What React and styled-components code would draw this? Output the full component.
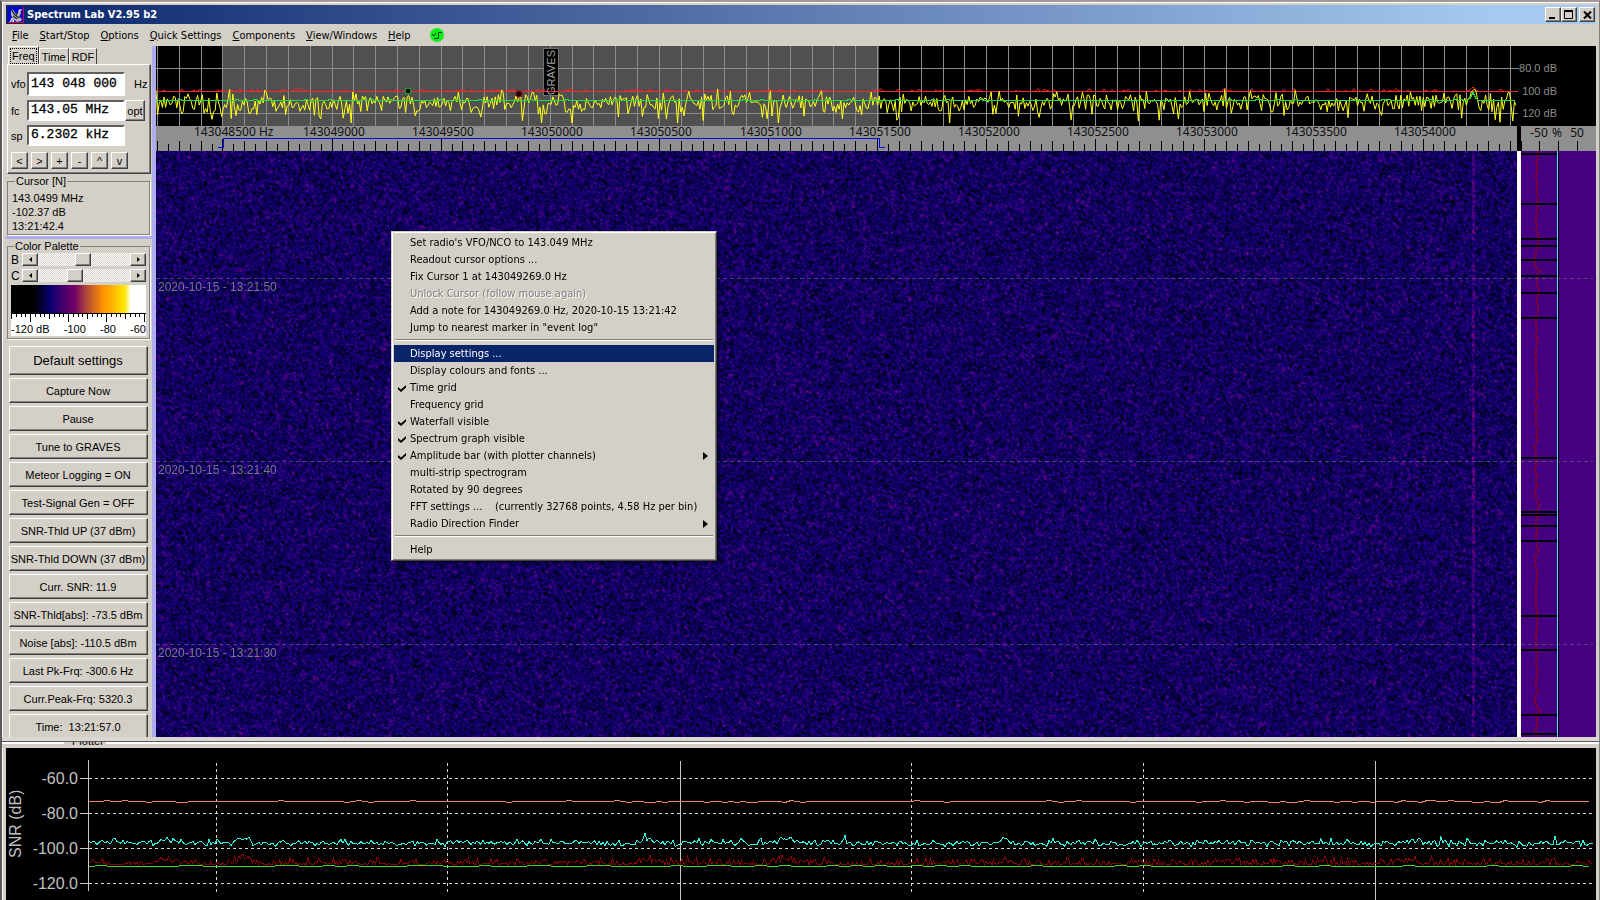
import React, { useEffect, useRef } from "react";
import styled, { createGlobalStyle, css } from "styled-components";

const face = "#d4d0c8";
const navy = "#0a246a";
const lavender = "#b0acf0";
const tahoma = '"DejaVu Sans Condensed", "Noto Sans", sans-serif';
const arial = '"Liberation Sans", Arial, sans-serif';

const GlobalStyle = createGlobalStyle`
  * { box-sizing: border-box; }
  body { margin: 0; background: ${face}; font: 11px ${arial}; color: #000; overflow: hidden; }
  button, input { font: inherit; color: inherit; margin: 0; }
`;

const raised = css`
  border: 1px solid;
  border-color: #fff #404040 #404040 #fff;
  box-shadow: inset -1px -1px 0 #808080;
  background: ${face};
`;

/* ---------- window frame ---------- */

const Window = styled.div`
  height: 100vh;
  display: flex;
  flex-direction: column;
  border-top: 2px solid #a29a98;
  border-left: 2px solid #5c5a58;
  border-right: 1px solid #808080;
  padding: 0 3px 0 4px;
  background: ${face};
  box-shadow: inset 1px 1px 0 #fff;
`;

const TitleBar = styled.header`
  margin-top: 3px;
  height: 19px;
  flex: none;
  display: flex;
  align-items: center;
  padding: 0 1px 0 2px;
  background: linear-gradient(90deg, ${navy}, #a6caf0 94%);
`;

const Title = styled.h1`
  margin: 0 auto 0 3px;
  font: bold 11px ${tahoma};
  color: #fff;
`;

const CaptionButton = styled.button`
  ${raised}
  width: 16px;
  height: 15px;
  padding: 0;
  margin-left: ${(p) => (p.$apart ? "2px" : 0)};
  display: flex;
  align-items: center;
  justify-content: center;
`;

const MenuBar = styled.nav`
  height: 22px;
  flex: none;
  display: flex;
  align-items: center;
  gap: 11px;
  padding-left: 6px;
`;

const MenuBarItem = styled.button`
  border: 0;
  padding: 0;
  background: none;
  font: 11px ${tahoma};
`;

const Status = styled.svg`
  margin-left: 8px;
`;

const Main = styled.main`
  flex: 1;
  min-height: 0;
  display: flex;
`;

/* ---------- side panel ---------- */

const Sidebar = styled.aside`
  width: 150px;
  flex: none;
  overflow: hidden;
  padding: 0 1px 0 1px;
  border-right: 4px solid ${lavender};
`;

const TabStrip = styled.div`
  display: flex;
  align-items: flex-end;
  height: 18px;
  padding-left: 1px;
`;

const Tab = styled.button`
  height: ${(p) => (p.$active ? "18px" : "16px")};
  padding: 0 2px;
  border: 1px solid;
  border-color: #fff #404040 transparent #fff;
  border-bottom: 0;
  background: ${face};
  line-height: 14px;
  & > span {
    display: block;
    padding: ${(p) => (p.$active ? "0 1px" : 0)};
    outline: ${(p) => (p.$active ? "1px dotted #000" : "none")};
  }
`;

const TabPanel = styled.section`
  display: flex;
  flex-direction: column;
  gap: 4px;
  padding: 7px 2px 4px 3px;
  border: 1px solid;
  border-color: #fff #404040 #404040 #fff;
  box-shadow: inset -1px -1px 0 #808080;
`;

const FieldRow = styled.div`
  display: flex;
  align-items: center;
  height: ${(p) => (p.$tall ? "24px" : "21px")};
`;

const FieldLabel = styled.label`
  width: 16px;
  flex: none;
  white-space: nowrap;
`;

const Field = styled.input`
  width: 98px;
  height: 100%;
  padding: 0 2px 2px;
  border: 2px solid;
  border-color: #606060 #fff #fff #606060;
  background: #fff;
  font: 13px "Liberation Mono", monospace;
  -webkit-text-stroke: 0.3px #000;
`;

const Unit = styled.span`
  margin-left: 9px;
`;

const OptButton = styled.button`
  ${raised}
  width: 20px;
  height: 21px;
  padding: 0;
`;

const StepRow = styled.div`
  display: flex;
  gap: 3px;
  padding-top: 2px;
`;

const StepButton = styled.button`
  ${raised}
  width: 17px;
  height: 17px;
  padding: 0;
  line-height: 12px;
`;

const Group = styled.fieldset`
  min-width: 0;
  margin: ${(p) => (p.$first ? "1px 1px 0 0" : "0 1px 0 0")};
  padding: ${(p) => (p.$first ? "3px 4px 1px" : "0 3px 2px")};
  border: 1px solid #808080;
  box-shadow: 1px 1px 0 #fff;
  line-height: 14px;
`;

const Legend = styled.legend`
  margin-left: 3px;
  padding: 0 1px;
  line-height: 13px;
`;

const Readout = styled.div``;

const Divider = styled.div`
  height: 3px;
  margin: 1px -1px;
  background: ${lavender};
`;

const SliderRow = styled.div`
  display: flex;
  align-items: center;
  height: 13px;
  margin-bottom: 3px;
`;

const SliderLabel = styled.label`
  width: 11px;
  font-size: 12px;
`;

const ArrowButton = styled.button`
  ${raised}
  width: 16px;
  height: 13px;
  padding: 0;
  display: flex;
  align-items: center;
  justify-content: center;
`;

const Slider = styled.input`
  appearance: none;
  flex: 1;
  min-width: 0;
  height: 13px;
  background: repeating-conic-gradient(#fff 0 25%, ${face} 0 50%) 0 0 / 2px 2px;
  &::-webkit-slider-thumb {
    appearance: none;
    ${raised}
    width: 16px;
    height: 13px;
  }
`;

const Palette = styled.div`
  background: #fff;
`;

const Gradient = styled.div`
  height: 28px;
  background: linear-gradient(
    90deg,
    #000 0 17%, #080070 29%, #40006a 38%, #700068 47%, #b04838 56%,
    #ff9000 68%, #ffb800 76%, #ffe800 84%, #fff 89%
  );
`;

const PaletteTicks = styled.svg`
  display: block;
`;

const PaletteLabels = styled.div`
  display: flex;
  justify-content: space-between;
  height: 13px;
  line-height: 13px;
`;

const ButtonList = styled.div`
  display: flex;
  flex-direction: column;
  gap: 3px;
  padding: 7px 3px 0 2px;
`;

const ActionButton = styled.button`
  ${raised}
  flex: none;
  height: ${(p) => (p.$large ? "29px" : "25px")};
  padding: 0 1px 0 0;
  font-size: ${(p) => (p.$large ? "13px" : "11px")};
  white-space: pre;
`;

/* ---------- spectrum and waterfall ---------- */

const Display = styled.section`
  flex: 1;
  min-width: 0;
  display: grid;
  grid-template-columns: minmax(0, 1fr) 4px 75px;
  grid-template-rows: 80px 25px minmax(0, 1fr);
`;

const Plot = styled.svg`
  display: block;
  width: 100%;
  height: 100%;
  background: ${(p) => p.$bg || "#000"};
  shape-rendering: crispEdges;
`;

const DbAxis = styled(Plot)`
  grid-column: 2 / 4;
`;

const Gutter = styled.div`
  background: ${(p) => p.$bg};
`;

const Waterfall = styled.div`
  position: relative;
  overflow: hidden;
  background: #100068;
`;

const Noise = styled.canvas`
  position: absolute;
  inset: 0;
`;

const Overlay = styled.svg`
  position: absolute;
  inset: 0;
  width: 100%;
  height: 100%;
`;

/* ---------- context menu ---------- */

const ContextMenu = styled.div`
  position: absolute;
  left: 391px;
  top: 231px;
  width: 326px;
  padding: 2px;
  border: 1px solid;
  border-color: ${face} #404040 #404040 ${face};
  box-shadow: inset 1px 1px 0 #fff, inset -1px -1px 0 #808080, 2px 2px 2px rgba(0, 0, 0, 0.5);
  background: ${face};
`;

const MenuItem = styled.button`
  display: grid;
  grid-template-columns: 16px 1fr 11px;
  align-items: center;
  width: 100%;
  height: 17px;
  padding: 0;
  border: 0;
  text-align: left;
  white-space: pre;
  font: 11px ${tahoma};
  background: ${(p) => (p.$selected ? navy : "none")};
  color: ${(p) => (p.$selected ? "#fff" : "#000")};
  &:disabled {
    color: #808080;
    text-shadow: 1px 1px 0 #fff;
  }
`;

const CheckMark = styled.svg`
  justify-self: center;
`;

const MenuRule = styled.hr`
  height: 2px;
  margin: 3px 1px 4px;
  border: 0;
  border-top: 1px solid #808080;
  border-bottom: 1px solid #fff;
`;

/* ---------- plotter ---------- */

const PlotterStrip = styled.div`
  flex: none;
  height: 11px;
  margin: 0 -3px 0 -4px;
  border-top: 4px solid #dad7d3;
  padding-top: 1px;
  background: linear-gradient(#5c5a58 1px, #fff 1px 3px, ${face} 3px);
`;

const PlotterTab = styled.div`
  display: flex;
  align-items: flex-end;
  width: 42px;
  height: 3px;
  margin-left: 62px;
  padding-left: 8px;
  overflow: hidden;
  background: ${face};
  line-height: 8px;
`;

const Plotter = styled.section`
  flex: none;
  height: 152px;
`;

/* ---------- data ---------- */

function random(seed) {
  let s = seed;
  return () => {
    s = (s + 0x6d2b79f5) | 0;
    let t = Math.imul(s ^ (s >>> 15), 1 | s);
    t = (t + Math.imul(t ^ (t >>> 7), 61 | t)) ^ t;
    return ((t ^ (t >>> 14)) >>> 0) / 4294967296;
  };
}

function trace(seed, from, to, step, value) {
  const rnd = random(seed);
  const pts = [];
  for (let x = from; x <= to; x += step) pts.push(`${x.toFixed(1)},${value(rnd, x).toFixed(1)}`);
  return pts.join(" ");
}

const range = (n) => Array.from({ length: n }, (_, i) => i);
const HZ = 21.82;
const SPAN = 1361;

const yellow = trace(7, 0, SPAN, 1.6, (r, x) => {
  const e = (-Math.log(r() + 1e-4) - Math.log(r() + 1e-4)) / 2;
  const peak = Math.abs(x - 1317) < 3 ? 6 : 0;
  return Math.max(45, Math.min(79, 57 - 19 * Math.log10(e) - peak)) - 2;
});
const redPeak = trace(3, 0, SPAN, 2, (r, x) => {
  const near = Math.max(0, 5 - Math.abs(x - 1317));
  return 45.5 - (r() > 0.75 ? r() * 3 : 0) - near;
});
const greenAvg = trace(5, 0, SPAN, 3, (r, x) => {
  const near = Math.max(0, 8 - Math.abs(x - 1317) * 2);
  return 54.5 - (r() > 0.9 ? 1 : 0) - near;
});

const bumps = [[89, 4], [160, 7], [236, 8], [640, 5], [780, 7], [1000, 4], [1215, 3], [1404, 5]];
const lift = (x) => bumps.reduce((a, [c, h]) => a + h * Math.exp(-(((x - c) / 9) ** 2)) * 0.6, 0);
const cyan = trace(21, 83, 1587, 2, (r, x) => 95.5 - lift(x) - (r() > 0.85 ? r() * 5 : 0) - r() * 4 + r() * 4);
const darkRed = trace(22, 83, 1587, 1.5, (r, x) => 117 - lift(x) - r() * r() * 9);
const orange = trace(23, 83, 1587, 6, (r) => 53.5 + (r() > 0.85 ? 1 : 0) - (r() > 0.93 ? 1 : 0));
const green = trace(24, 83, 1587, 12, (r) => 118.5 - (r() > 0.75 ? 1 : 0));
const drift = trace(31, 0, 1400, 5, (r) => 14 + r() * 3 + (r() > 0.9 ? 2 : 0))
  .split(" ")
  .map((p) => p.split(",").reverse().join(","))
  .join(" ");

const events = [3, 53, 88, 95, 109, 125, 142, 167, 307, 361, 364, 375, 390, 465, 499, 564, 583];
const times = [
  [127, "2020-10-15 - 13:21:50"],
  [310, "2020-10-15 - 13:21:40"],
  [493, "2020-10-15 - 13:21:30"],
];

const menuBar = ["File", "Start/Stop", "Options", "Quick Settings", "Components", "View/Windows", "Help"];

const actions = [
  "Capture Now", "Pause", "Tune to GRAVES", "Meteor Logging = ON", "Test-Signal Gen = OFF",
  "SNR-Thld UP (37 dBm)", "SNR-Thld DOWN (37 dBm)", "Curr. SNR: 11.9", "SNR-Thld[abs]: -73.5 dBm",
  "Noise [abs]: -110.5 dBm", "Last Pk-Frq: -300.6 Hz", "Curr.Peak-Frq: 5320.3", "Time:  13:21:57.0",
];

const contextMenu = [
  { text: "Set radio's VFO/NCO to 143.049 MHz" },
  { text: "Readout cursor options ..." },
  { text: "Fix Cursor 1 at 143049269.0 Hz" },
  { text: "Unlock Cursor (follow mouse again)", disabled: true },
  { text: "Add a note for 143049269.0 Hz, 2020-10-15 13:21:42" },
  { text: 'Jump to nearest marker in "event log"' },
  null,
  { text: "Display settings ...", selected: true },
  { text: "Display colours and fonts ..." },
  { text: "Time grid", checked: true },
  { text: "Frequency grid" },
  { text: "Waterfall visible", checked: true },
  { text: "Spectrum graph visible", checked: true },
  { text: "Amplitude bar (with plotter channels)", checked: true, sub: true },
  { text: "multi-strip spectrogram" },
  { text: "Rotated by 90 degrees" },
  { text: "FFT settings ...    (currently 32768 points, 4.58 Hz per bin)" },
  { text: "Radio Direction Finder", sub: true },
  null,
  { text: "Help" },
];

/* ---------- parts ---------- */

function AppIcon() {
  return (
    <svg width="16" height="16" viewBox="0 0 16 16" aria-hidden="true">
      <rect width="16" height="16" fill="#e00030" />
      <rect width="15" height="15" fill="#0000d8" />
      <path d="M3 2l2 1 3 4 3-3 1-2 1 4-2 4 3 2-1 2-4 1-4-3-2-4z" fill="#b8b8b8" />
      <path d="M3 2l3 5 5 4M12 3L8 8M5 9l4 3" stroke="#222" strokeWidth="1.2" fill="none" />
      <path d="M2 15l2-4 2 4M3 14h3M11 3h3M11 3v3" stroke="#fff" fill="none" />
    </svg>
  );
}

function Triangle({ left, small }) {
  return (
    <svg width={small ? 3 : 5} height={small ? 5 : 8} viewBox="0 0 5 8" preserveAspectRatio="none" aria-hidden="true">
      <path d={left ? "M5 0v8L0 4z" : "M0 0v8l5-4z"} fill="#000" />
    </svg>
  );
}

function Check() {
  return (
    <CheckMark width="8" height="8" viewBox="0 0 8 8" aria-hidden="true">
      <path d="M0 3l3 2.5L8 1v2.5L3 8 0 5.5z" fill="#000" />
    </CheckMark>
  );
}

function NoiseField() {
  const ref = useRef(null);
  useEffect(() => {
    const canvas = ref.current;
    const draw = () => {
      const w = canvas.parentElement.clientWidth;
      const h = canvas.parentElement.clientHeight;
      if (!w || !h) return;
      canvas.width = w;
      canvas.height = h;
      const ctx = canvas.getContext("2d");
      const img = ctx.createImageData(w, h);
      const rnd = random(99);
      const raw = new Float32Array(w * h);
      for (let i = 0; i < raw.length; i++) raw[i] = rnd() + rnd() - 1;
      const at = (i) => raw[i] || 0;
      for (let y = 0; y < h; y++) {
        for (let x = 0; x < w; x++) {
          const i = y * w + x;
          let v =
            at(i) * 0.5 + at(i - 1) * 0.4 + at(i - w) * 0.4 + at(i - w - 1) * 0.3 +
            (at(i + 1) + at(i + w) + at(i + w + 1) + at(i - w + 1)) * 0.15;
          const d = Math.abs(x - 1317);
          if (d < 2) v += 0.75 - d * 0.25;
          const hot = Math.max(0, v - 0.25);
          img.data[i * 4] = Math.min(150, Math.max(0, 15 + v * 20) + hot * 80);
          img.data[i * 4 + 1] = 0;
          img.data[i * 4 + 2] = Math.max(20, Math.min(120, 98 + v * 90));
          img.data[i * 4 + 3] = 255;
        }
      }
      ctx.putImageData(img, 0, 0);
    };
    draw();
    const observer = new ResizeObserver(draw);
    observer.observe(canvas.parentElement);
    return () => observer.disconnect();
  }, []);
  return <Noise ref={ref} />;
}

function SpectrumGraph() {
  return (
    <Plot role="img" aria-label="Spectrum">
      <rect x="67" width="656" height="80" fill="#505050" />
      <g stroke="#8c8c8c">
        {range(63).map((k) => (
          <line key={k} x1={Math.round(1 + k * HZ) + 0.5} x2={Math.round(1 + k * HZ) + 0.5} y1="0" y2="80" />
        ))}
        {[22.5, 67.5].map((y) => <line key={y} x1="0" x2="100%" y1={y} y2={y} />)}
      </g>
      <rect x="387.5" y="2.5" width="15" height="47" fill="#000" stroke="#707070" />
      <rect y="45" width="100%" height="1" fill="#f03030" />
      <g fill="none">
        <polyline points={redPeak} stroke="#f02828" shapeRendering="auto" />
        <polyline points={yellow} stroke="#ffff18" shapeRendering="auto" />
        <polyline points={greenAvg} stroke="#20e040" />
      </g>
      <text transform="translate(399 49) rotate(-90)" fontSize="11" fill="#a0a0a0">GRAVES</text>
      <circle cx="252" cy="45" r="3" fill="#000" stroke="#20c040" shapeRendering="auto" />
      <circle cx="363" cy="48" r="3" fill="#200000" stroke="#900000" shapeRendering="auto" />
    </Plot>
  );
}

function FrequencyScale() {
  return (
    <Plot $bg="#8f8f8f" role="img" aria-label="Frequency scale">
      <g stroke="#000">
        {range(125).map((k) => {
          const x = Math.round(1 + (k * HZ) / 2) + 0.5;
          return <line key={k} x1={x} x2={x} y1={k % 10 === 6 ? 13 : k % 2 ? 18 : 15} y2="25" />;
        })}
      </g>
      <g fill="#0808e0">
        <rect x="67" y="12" width="657" height="1" />
        <rect x="67" y="12" width="1" height="9" />
        <rect x="62" y="21" width="6" height="1" />
        <rect x="723" y="12" width="1" height="9" />
        <rect x="723" y="21" width="6" height="1" />
      </g>
      <g fontFamily='"Noto Sans", sans-serif' fontSize="12" fill="#101010">
        {range(12).map((k) => (
          <text key={k} x={Math.round(38 + k * 109.1)} y="10">
            {143048500 + k * 500}{k === 0 ? " Hz" : ""}
          </text>
        ))}
      </g>
    </Plot>
  );
}

function AmplitudeBar() {
  return (
    <Plot $bg="#440080" role="img" aria-label="Amplitude bar">
      <polyline points={drift} fill="none" stroke="#78003c" strokeWidth="2" />
      {events.map((y) => <rect key={y} y={y - 1} width="38" height="2" fill="#000" />)}
      <line x1="36.5" x2="36.5" y1="0" y2="100%" stroke="#60d8f0" />
      <line x1="37.5" x2="37.5" y1="0" y2="100%" stroke="#000" />
      {times.map(([y]) => (
        <line key={y} x1="0" x2="72" y1={y + 0.5} y2={y + 0.5} stroke="#707080" strokeDasharray="4 3" opacity="0.6" />
      ))}
    </Plot>
  );
}

function PlotterChart() {
  return (
    <Plot role="img" aria-label="Plotter">
      <g stroke="#d8d8d8" strokeDasharray="3 3">
        {[30.5, 65.5, 100.5, 135.5].map((y) => <line key={y} x1="83" x2="1587" y1={y} y2={y} />)}
        {[210.5, 441.5, 905.5, 1137.5].map((x) => <line key={x} x1={x} x2={x} y1="15" y2="144" />)}
      </g>
      <g stroke="#c8c8c8">
        <line x1="82.5" x2="82.5" y1="12" y2="143" />
        {[674.5, 1369.5].map((x) => <line key={x} x1={x} x2={x} y1="13" y2="152" />)}
        {[30.5, 65.5, 100.5, 135.5].map((y) => <line key={y} x1="74" x2="83" y1={y} y2={y} />)}
      </g>
      <g fill="none">
        <polyline points={orange} stroke="#f08860" />
        <polyline points={darkRed} stroke="#800808" />
        <polyline points={cyan} stroke="#30f0e0" />
        <polyline points={green} stroke="#40d830" />
      </g>
      <g fill="#c0c0c0" fontSize="16">
        {["-60.0", "-80.0", "-100.0", "-120.0"].map((t, i) => (
          <text key={t} x="72" y={36 + i * 35} textAnchor="end">{t}</text>
        ))}
        <text transform="translate(15 110) rotate(-90)">SNR (dB)</text>
      </g>
    </Plot>
  );
}

function PaletteSlider({ id, label, value }) {
  return (
    <SliderRow>
      <SliderLabel htmlFor={id}>{label}</SliderLabel>
      <ArrowButton aria-label="Less"><Triangle left small /></ArrowButton>
      <Slider id={id} type="range" defaultValue={value} />
      <ArrowButton aria-label="More"><Triangle small /></ArrowButton>
    </SliderRow>
  );
}

function SidePanel() {
  return (
    <Sidebar>
      <TabStrip>
        <Tab $active><span>Freq</span></Tab>
        <Tab><span>Time</span></Tab>
        <Tab><span>RDF</span></Tab>
      </TabStrip>
      <TabPanel>
        <FieldRow $tall>
          <FieldLabel htmlFor="vfo">vfo</FieldLabel>
          <Field id="vfo" defaultValue="143 048 000" />
          <Unit>Hz</Unit>
        </FieldRow>
        <FieldRow>
          <FieldLabel htmlFor="fc">fc</FieldLabel>
          <Field id="fc" defaultValue="143.05 MHz" />
          <OptButton>opt</OptButton>
        </FieldRow>
        <FieldRow>
          <FieldLabel htmlFor="sp">sp</FieldLabel>
          <Field id="sp" defaultValue="6.2302 kHz" />
        </FieldRow>
        <StepRow>
          {["<", ">", "+", "-", "^", "v"].map((s) => <StepButton key={s}>{s}</StepButton>)}
        </StepRow>
      </TabPanel>
      <Group $first>
        <Legend>Cursor [N]</Legend>
        <Readout>143.0499 MHz</Readout>
        <Readout>-102.37 dB</Readout>
        <Readout>13:21:42.4</Readout>
      </Group>
      <Divider />
      <Group>
        <Legend>Color Palette</Legend>
        <PaletteSlider id="bright" label="B" value={49} />
        <PaletteSlider id="contrast" label="C" value={38} />
        <Palette>
          <Gradient />
          <PaletteTicks width="100%" height="10" shapeRendering="crispEdges" aria-hidden="true">
            <path d="M0 .5h136" stroke="#000" />
            {range(29).map((k) => (
              <line key={k} x1={Math.round(k * 4.75) + 0.5} x2={Math.round(k * 4.75) + 0.5} y1="0" y2={k % 8 === 4 ? 9 : k % 4 === 0 ? 6 : 4} stroke="#000" />
            ))}
          </PaletteTicks>
          <PaletteLabels>
            <span>-120 dB</span><span>-100</span><span>-80</span><span>-60</span>
          </PaletteLabels>
        </Palette>
      </Group>
      <ButtonList>
        <ActionButton $large>Default settings</ActionButton>
        {actions.map((a) => <ActionButton key={a}>{a}</ActionButton>)}
      </ButtonList>
    </Sidebar>
  );
}

export default function App() {
  return (
    <>
      <GlobalStyle />
      <Window>
        <TitleBar>
          <AppIcon />
          <Title>Spectrum Lab V2.95 b2</Title>
          <CaptionButton aria-label="Minimize">
            <svg width="10" height="9"><rect x="1" y="7" width="6" height="2" /></svg>
          </CaptionButton>
          <CaptionButton aria-label="Maximize">
            <svg width="10" height="9"><path d="M.5 0v8.5h8V0" fill="none" stroke="#000" /><rect width="9" height="2" /></svg>
          </CaptionButton>
          <CaptionButton aria-label="Close" $apart>
            <svg width="9" height="8"><path d="M1 .5l7 7M8 .5l-7 7" stroke="#000" strokeWidth="2" /></svg>
          </CaptionButton>
        </TitleBar>
        <MenuBar>
          {menuBar.map((m) => (
            <MenuBarItem key={m}><u>{m[0]}</u>{m.slice(1)}</MenuBarItem>
          ))}
          <Status width="14" height="14" viewBox="0 0 14 14" aria-hidden="true">
            <circle cx="7" cy="7" r="7" fill="#08f018" />
            <path d="M2 6l2 2 2-3M4 10.5h4.5v-6H12" fill="none" stroke="#084010" />
          </Status>
        </MenuBar>
        <Main>
          <SidePanel />
          <Display>
            <SpectrumGraph />
            <DbAxis>
              <path d="M0 22.5h2M0 45.5h1M0 67.5h1" stroke="#8c8c8c" />
              <g fill="#8c8c8c" fontSize="11" textAnchor="end">
                <text x="40" y="26">80.0 dB</text>
                <text x="40" y="49">100 dB</text>
                <text x="40" y="71">120 dB</text>
              </g>
            </DbAxis>
            <FrequencyScale />
            <Gutter $bg="#000" />
            <Plot $bg="#8f8f8f" role="img" aria-label="Percent scale">
              <path d="M.5 15v10M18.5 15v10M37.5 15v10M56.5 15v10" stroke="#000" />
              <g fontFamily='"Noto Sans", sans-serif' fontSize="12" fill="#101010" textAnchor="middle">
                <text x="18" y="11">-50</text>
                <text x="36" y="11">%</text>
                <text x="56" y="11">50</text>
              </g>
            </Plot>
            <Waterfall>
              <NoiseField />
              <Overlay>
                {times.map(([y, t]) => (
                  <g key={t}>
                    <line x1="0" x2="100%" y1={y + 0.5} y2={y + 0.5} stroke="#8080a0" strokeDasharray="4 3" opacity="0.5" />
                    <text x="2" y={y + 13} fontSize="12" fill="#77778c">{t}</text>
                  </g>
                ))}
              </Overlay>
            </Waterfall>
            <Gutter $bg="#fff" />
            <AmplitudeBar />
          </Display>
        </Main>
        <PlotterStrip><PlotterTab>Plotter</PlotterTab></PlotterStrip>
        <Plotter><PlotterChart /></Plotter>
      </Window>
      <ContextMenu role="menu">
        {contextMenu.map((item, i) =>
          item ? (
            <MenuItem key={i} role="menuitem" disabled={item.disabled} $selected={item.selected}>
              {item.checked ? <Check /> : <span />}
              <span>{item.text}</span>
              {item.sub && <Triangle />}
            </MenuItem>
          ) : (
            <MenuRule key={i} />
          )
        )}
      </ContextMenu>
    </>
  );
}
